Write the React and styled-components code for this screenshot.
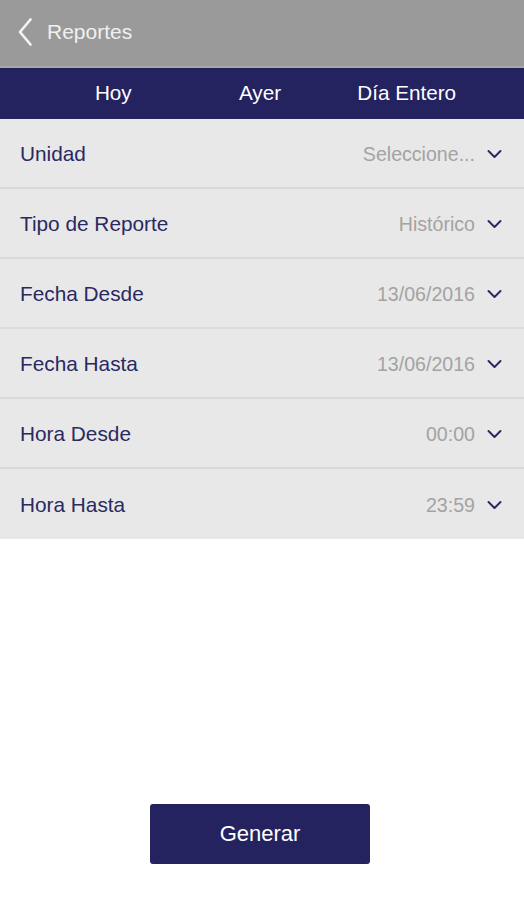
import React from "react";
import styled, { createGlobalStyle } from "styled-components";

const Global = createGlobalStyle`
  html, body { margin: 0; padding: 0; background: #ffffff; }
  body { font-family: "Liberation Sans", Arial, sans-serif; }
  * { box-sizing: border-box; }
`;

const Page = styled.div`
  width: 524px;
  height: 900px;
  display: flex;
  flex-direction: column;
  background: #ffffff;
`;

const Header = styled.header`
  height: 68px;
  background: #9a9a9a;
  border-bottom: 2px solid #a8a8a8;
  display: flex;
  align-items: center;
  padding: 0 0 3px 17px;
  gap: 14px;
  color: #f0f0f0;
`;

const Title = styled.span`
  font-size: 21px;
`;

const Tabs = styled.nav`
  height: 51px;
  background: #24235f;
  display: grid;
  grid-template-columns: repeat(3, 1fr);
  padding: 0 44px 0 40px;
  align-items: center;
`;

const Tab = styled.button`
  background: none;
  border: none;
  color: #ffffff;
  font: inherit;
  font-size: 20.7px;
  text-align: center;
  padding: 0 0 2px;
`;

const List = styled.div`
  background: #e8e8e8;
  display: flex;
  flex-direction: column;
`;

const Row = styled.div`
  height: 70px;
  display: flex;
  align-items: center;
  justify-content: space-between;
  padding: 2px 22px 0 20px;
  border-bottom: ${(p) => (p.$last ? "none" : "2px solid #dadada")};
`;

const Label = styled.span`
  color: #2a2961;
  font-size: 20.8px;
`;

const Value = styled.span`
  display: flex;
  align-items: center;
  gap: 12px;
  color: #a3a3a3;
  font-size: 19.6px;
`;

const Footer = styled.div`
  flex: 1;
  display: flex;
  align-items: flex-end;
  justify-content: center;
  padding: 0 4px 36px 0;
`;

const Button = styled.button`
  width: 220px;
  height: 60px;
  background: #24235f;
  border: none;
  border-radius: 3px;
  color: #ffffff;
  font: inherit;
  font-size: 22px;
`;

const Chevron = () => (
  <svg width="15" height="10" viewBox="0 0 15 10" fill="none">
    <path d="M1.5 2 L7.5 8 L13.5 2" stroke="#2a2961" strokeWidth="2" strokeLinecap="round" strokeLinejoin="round" />
  </svg>
);

const Back = () => (
  <svg width="16" height="28" viewBox="0 0 16 28" fill="none">
    <path d="M13.5 1.5 L3 14 L13.5 26.5" stroke="#f4f4f4" strokeWidth="2.6" strokeLinecap="round" strokeLinejoin="round" />
  </svg>
);

const rows = [
  ["Unidad", "Seleccione..."],
  ["Tipo de Reporte", "Histórico"],
  ["Fecha Desde", "13/06/2016"],
  ["Fecha Hasta", "13/06/2016"],
  ["Hora Desde", "00:00"],
  ["Hora Hasta", "23:59"],
];

export default function App() {
  return (
    <Page>
      <Global />
      <Header>
        <Back />
        <Title>Reportes</Title>
      </Header>
      <Tabs>
        <Tab>Hoy</Tab>
        <Tab>Ayer</Tab>
        <Tab>Día Entero</Tab>
      </Tabs>
      <List>
        {rows.map(([l, v], i) => (
          <Row key={l} $last={i === rows.length - 1}>
            <Label>{l}</Label>
            <Value>
              {v}
              <Chevron />
            </Value>
          </Row>
        ))}
      </List>
      <Footer>
        <Button>Generar</Button>
      </Footer>
    </Page>
  );
}
